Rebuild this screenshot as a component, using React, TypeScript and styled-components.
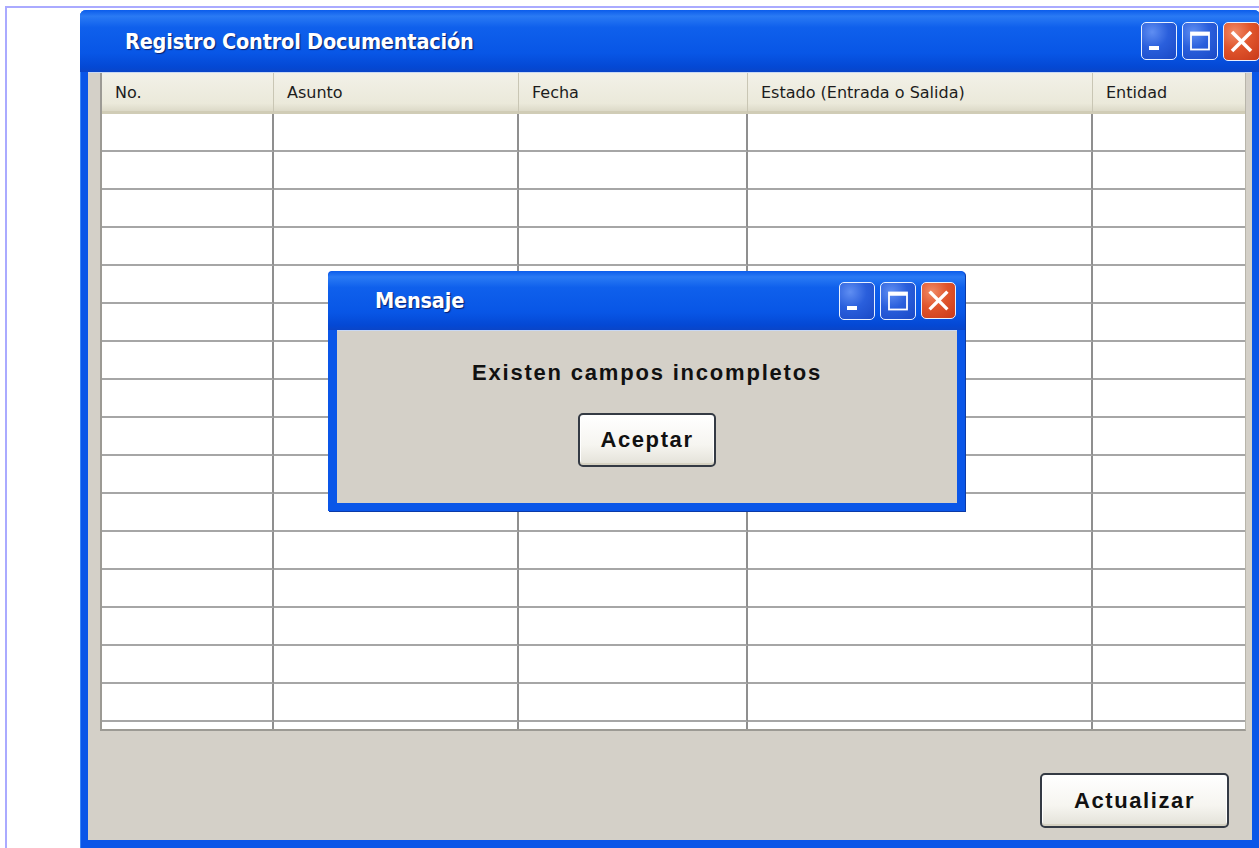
import React from "react";
import styled, { createGlobalStyle, css } from "styled-components";

const GlobalStyle = createGlobalStyle`
    html, body {
        margin: 0;
        padding: 0;
        background: #ffffff;
        overflow: hidden;
    }
    body {
        font-family: "DejaVu Sans", "Liberation Sans", sans-serif;
    }
`;

const columns = [
    { title: "No.", width: 172 },
    { title: "Asunto", width: 245 },
    { title: "Fecha", width: 229 },
    { title: "Estado (Entrada o Salida)", width: 345 },
    { title: "Entidad", width: 0 },
];

const ROWS = 16;

type CaptionButtonKind = "min" | "max" | "close";

const CaptionButton = ({ kind, size }: { kind: CaptionButtonKind; size: number }) => (
    <CapBtn $kind={kind} $size={size}>
        <svg width={size - 4} height={size - 4} viewBox="0 0 32 32">
            {kind === "min" && <rect x="6" y="21" width="10" height="4" fill="#fff" />}
            {kind === "max" && (
                <g fill="none" stroke="#fff">
                    <rect x="7" y="7.5" width="18" height="17" strokeWidth="1.8" />
                    <line x1="7" y1="9" x2="25" y2="9" strokeWidth="3.5" />
                </g>
            )}
            {kind === "close" && (
                <g stroke="#fff" strokeWidth="3.4" strokeLinecap="square">
                    <line x1="8" y1="8" x2="24" y2="24" />
                    <line x1="24" y1="8" x2="8" y2="24" />
                </g>
            )}
        </svg>
    </CapBtn>
);

const App = () => {
    return (
        <Page>
            <GlobalStyle />
            <Window>
                <TitleBar $height={62}>
                    <Title $indent={45}>Registro Control Documentación</Title>
                    <Controls $gap={5} $right={0}>
                        <CaptionButton kind="min" size={36} />
                        <CaptionButton kind="max" size={36} />
                        <CaptionButton kind="close" size={37} />
                    </Controls>
                </TitleBar>
                <Body>
                    <Grid>
                        {columns.map((c, i) => (
                            <HeadCell key={c.title} $last={i === columns.length - 1}>
                                {c.title}
                            </HeadCell>
                        ))}
                        {Array.from({ length: ROWS * columns.length }).map((_, i) => (
                            <Cell key={i} $last={i % columns.length === columns.length - 1} />
                        ))}
                        {columns.map((c, i) => (
                            <Filler key={"f" + c.title} $last={i === columns.length - 1} />
                        ))}
                    </Grid>
                    <Footer>
                        <XpButton $w={189} $h={55}>Actualizar</XpButton>
                    </Footer>
                </Body>

                <Dialog>
                    <TitleBar $height={59}>
                        <Title $indent={47}>Mensaje</Title>
                        <Controls $gap={5} $right={9}>
                            <CaptionButton kind="min" size={36} />
                            <CaptionButton kind="max" size={36} />
                            <CaptionButton kind="close" size={35} />
                        </Controls>
                    </TitleBar>
                    <DialogBody>
                        <Message>Existen campos incompletos</Message>
                        <XpButton $w={138} $h={54}>Aceptar</XpButton>
                    </DialogBody>
                </Dialog>
            </Window>
        </Page>
    );
};

export default App;

const xpBlue = "#0a56e8";

const Page = styled.div`
    margin: 6px 0 0 5px;
    height: 842px;
    border-top: 2px solid #aaaaff;
    border-left: 2px solid #aaaaff;
    padding: 2px 0 0 73px;
    box-sizing: border-box;
    overflow: hidden;
`;

const Window = styled.div`
    position: relative;
    width: 1180px;
    height: 838px;
    display: flex;
    flex-direction: column;
    background: ${xpBlue};
    border-radius: 6px 6px 0 0;
    box-shadow: inset 1px 1px 0 #3b86f5;
`;

const TitleBar = styled.div<{ $height: number }>`
    height: ${(p) => p.$height}px;
    flex: none;
    display: flex;
    align-items: center;
    justify-content: space-between;
    background: linear-gradient(
        to bottom,
        #0b5ceb 0%,
        #2a7af4 10%,
        #0f60ec 28%,
        #0856e6 70%,
        #0448d4 92%,
        #0a45c8 100%
    );
    border-radius: 6px 6px 0 0;
`;

const Title = styled.span<{ $indent: number }>`
    padding-left: ${(p) => p.$indent}px;
    color: #ffffff;
    font-family: "DejaVu Sans Condensed", "DejaVu Sans", sans-serif;
    font-weight: bold;
    font-size: 21.5px;
    letter-spacing: -0.2px;
    text-shadow: 1px 1px 1px #0a1f6b;
`;

const Controls = styled.div<{ $gap: number; $right: number }>`
    display: flex;
    align-items: center;
    gap: ${(p) => p.$gap}px;
    padding-right: ${(p) => p.$right}px;
`;

const CapBtn = styled.div<{ $kind: CaptionButtonKind; $size: number }>`
    width: ${(p) => p.$size}px;
    height: ${(p) => p.$size + 2}px;
    box-sizing: border-box;
    border: 1.5px solid #e8f0ff;
    border-radius: 5px;
    display: flex;
    align-items: center;
    justify-content: center;
    ${(p) =>
        p.$kind === "close"
            ? css`
                  background: radial-gradient(circle at 30% 25%, #f08a66 0%, #e0552c 45%, #c9391a 100%);
              `
            : css`
                  background: radial-gradient(circle at 30% 25%, #5f8ef2 0%, #2a5fdc 45%, #1a49c6 100%);
              `}
`;

const Body = styled.div`
    flex: 1;
    margin: 0 8px 8px 8px;
    background: #d4d0c8;
    display: flex;
    flex-direction: column;
    padding: 1px 6px 0 12px;
    box-shadow: inset 0 1px 0 #c8d8f5;
`;

const Grid = styled.div`
    display: grid;
    grid-template-columns: ${columns
        .map((c) => (c.width ? `${c.width}px` : "1fr"))
        .join(" ")};
    grid-template-rows: 41px repeat(${ROWS}, 38px) 7px;
    background: #ffffff;
    border-left: 2px solid #9c9a94;
    border-right: 1px solid #b8b5aa;
    border-bottom: 2px solid #9c9a94;
`;

const HeadCell = styled.div<{ $last: boolean }>`
    display: flex;
    align-items: center;
    padding-left: 13px;
    font-size: 16px;
    color: #1c1c1c;
    background: linear-gradient(to bottom, #f2f1e8 0%, #ebe9da 80%, #dcd9c7 100%);
    border-bottom: 3px solid #d0ccb6;
    border-right: ${(p) => (p.$last ? "none" : "1px solid #c9c6b4")};
`;

const Cell = styled.div<{ $last: boolean }>`
    border-bottom: 2px solid #a6a6a6;
    border-right: ${(p) => (p.$last ? "none" : "2px solid #8f8f8f")};
`;

const Filler = styled.div<{ $last: boolean }>`
    border-right: ${(p) => (p.$last ? "none" : "2px solid #8f8f8f")};
`;

const Footer = styled.div`
    flex: 1;
    display: flex;
    justify-content: flex-end;
    align-items: flex-start;
    padding: 42px 17px 0 0;
`;

const XpButton = styled.button<{ $w: number; $h: number }>`
    width: ${(p) => p.$w}px;
    height: ${(p) => p.$h}px;
    border: 2px solid #343a44;
    border-radius: 5px;
    background: linear-gradient(to bottom, #ffffff 0%, #f6f5f0 60%, #e3e1d8 100%);
    box-shadow: inset 0 -2px 0 #d6d2c2, inset 0 0 0 1px #ffffff;
    font-family: "Liberation Sans", Arial, sans-serif;
    font-weight: bold;
    font-size: 22px;
    letter-spacing: 1.6px;
    color: #111111;
    padding: 0;
`;

const Dialog = styled.div`
    position: absolute;
    left: 248px;
    top: 261px;
    width: 637px;
    height: 240px;
    display: flex;
    flex-direction: column;
    background: ${xpBlue};
    border-radius: 4px 4px 0 0;
    box-shadow: 1px 1px 0 #0a3aa8;
`;

const DialogBody = styled.div`
    flex: 1;
    margin: 0 8px 8px 9px;
    background: #d4d0c8;
    display: flex;
    flex-direction: column;
    align-items: center;
    padding-top: 30px;
    gap: 27px;
    box-shadow: inset 0 1px 0 #c8d8f5;
`;

const Message = styled.div`
    font-family: "Liberation Sans", Arial, sans-serif;
    font-weight: bold;
    font-size: 22px;
    letter-spacing: 1.8px;
    color: #111111;
`;
